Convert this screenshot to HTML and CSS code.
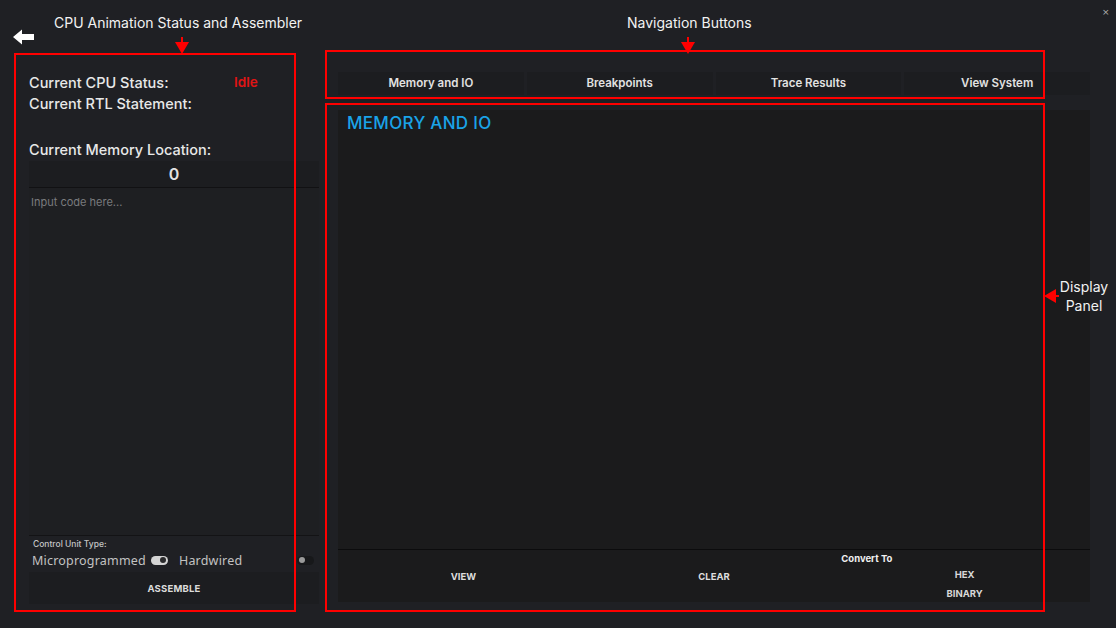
FILE: index.html
```html
<!DOCTYPE html>
<html>
<head>
<meta charset="utf-8">
<link rel="stylesheet" href="styles.css">
</head>
<body>
<div class="app">
  <aside class="left">
    <div class="status">
      <div class="status-row"><span>Current CPU Status:</span><span class="idle">Idle</span></div>
      <div class="status-row"><span>Current RTL Statement:</span></div>
    </div>
    <div class="mem-label">Current Memory Location:</div>
    <div class="mem-box">0</div>
    <textarea class="code" placeholder="Input code here..."></textarea>
    <div class="cu">
      <div class="cu-label">Control Unit Type:</div>
      <div class="cu-row">
        <span class="cu-opt">Microprogrammed</span>
        <span class="toggle on"><span class="knob"></span></span>
        <span class="cu-opt">Hardwired</span>
        <span class="spacer"></span>
        <span class="toggle off"><span class="knob"></span></span>
      </div>
    </div>
    <div class="assemble">ASSEMBLE</div>
  </aside>
  <main class="right">
    <nav class="nav">
      <div class="nav-btn">Memory and IO</div>
      <div class="nav-btn">Breakpoints</div>
      <div class="nav-btn">Trace Results</div>
      <div class="nav-btn">View System</div>
    </nav>
    <section class="display">
      <h1 class="title">MEMORY AND IO</h1>
      <div class="content"></div>
      <div class="actions">
        <div class="act">VIEW</div>
        <div class="act">CLEAR</div>
        <div class="convert">
          <div class="conv-label">Convert To</div>
          <div class="conv-opt">HEX</div>
          <div class="conv-opt">BINARY</div>
        </div>
      </div>
    </section>
  </main>
</div>

<svg class="back" width="22" height="16" viewBox="0 0 22 16"><path d="M0 8 L9 0.5 L9 5 L21 5 L21 11 L9 11 L9 15.5 Z" fill="#ffffff"/></svg>
<div class="close">×</div>

<div class="note note-left">CPU Animation Status and Assembler</div>
<div class="note note-nav">Navigation Buttons</div>
<div class="note note-display">Display<br>Panel</div>

<svg class="arrow arrow-1" width="14" height="17" viewBox="0 0 14 17"><rect x="6" y="0" width="2" height="6" fill="#ff0000"/><path d="M0 5 L14 5 L7 17 Z" fill="#ff0000"/></svg>
<svg class="arrow arrow-2" width="14" height="17" viewBox="0 0 14 17"><rect x="6" y="0" width="2" height="6" fill="#ff0000"/><path d="M0 5 L14 5 L7 17 Z" fill="#ff0000"/></svg>
<svg class="arrow arrow-3" width="15" height="14" viewBox="0 0 15 14"><path d="M0 7 L12 0 L12 14 Z" fill="#ff0000"/><rect x="11" y="6" width="4" height="2" fill="#ff0000"/></svg>

<div class="box box-left"></div>
<div class="box box-nav"></div>
<div class="box box-display"></div>
</body>
</html>
```

FILE: styles.css
```css
* { box-sizing: border-box; }
html, body {
  margin: 0;
  padding: 0;
  width: 1116px;
  height: 628px;
  overflow: hidden;
  background: #1f2024;
  font-family: Inter, "Noto Sans", sans-serif;
  color: #e6e6e6;
  position: relative;
}
.app {
  display: flex;
  gap: 19px;
  height: 628px;
  padding: 60px 26px 24px 29px;
}
.left {
  width: 290px;
  display: flex;
  flex-direction: column;
}
.status {
  padding-top: 12px;
}
.status-row {
  display: grid;
  grid-template-columns: 205px auto;
  font-size: 14.5px;
  font-weight: 500;
  line-height: 21px;
  color: #e8e8e8;
}
.idle {
  color: #e11414;
  font-weight: 600;
  font-size: 13.5px;
}
.mem-label {
  margin-top: 25px;
  font-size: 14.5px;
  font-weight: 500;
  line-height: 21px;
  color: #e8e8e8;
}
.mem-box {
  margin-top: 1px;
  height: 27px;
  background: #1c1d20;
  border-bottom: 1px solid #111113;
  text-align: center;
  font-size: 16px;
  font-weight: 600;
  line-height: 26px;
  color: #e2e2e2;
}
.code {
  flex: 1;
  resize: none;
  background: #1e1f22;
  border: none;
  border-bottom: 1px solid #131315;
  outline: none;
  color: #ddd;
  font-family: Inter, sans-serif;
  font-size: 11px;
  padding: 7px 2px;
  margin: 0;
}
.code::placeholder { color: #7a7b7e; }
.cu {
  height: 36px;
  padding: 2px 0 0 4px;
}
.cu-label {
  font-size: 8.5px;
  font-weight: 500;
  color: #c4c4c4;
  line-height: 12px;
}
.cu-row {
  display: flex;
  align-items: center;
  height: 20px;
  margin-left: -1px;
}
.cu-opt {
  font-family: "Noto Sans", sans-serif;
  font-size: 12.5px;
  color: #c2c2c2;
  letter-spacing: 0.2px;
}
.spacer { flex: 1; }
.toggle {
  display: inline-flex;
  align-items: center;
  width: 17px;
  height: 9px;
  border-radius: 5px;
  margin: 0 11px 0 5px;
  padding: 0 2px;
}
.toggle.on { background: #d4d4d4; justify-content: flex-end; }
.toggle.on .knob { background: #2a2a2c; }
.toggle.off { background: #17181a; justify-content: flex-start; margin: 0 5px 0 0; }
.toggle.off .knob { background: #9a9a9a; }
.knob {
  width: 6px;
  height: 6px;
  border-radius: 50%;
}
.assemble {
  height: 32px;
  background: #1c1d20;
  text-align: center;
  line-height: 33px;
  font-size: 9.5px;
  font-weight: 700;
  color: #dcdcdc;
  letter-spacing: 0.2px;
}
.right {
  flex: 1;
  display: flex;
  flex-direction: column;
}
.nav {
  margin-top: 12px;
  display: flex;
  gap: 3px;
  height: 23px;
}
.nav-btn {
  flex: 1;
  background: #1c1d20;
  text-align: center;
  line-height: 23px;
  font-size: 11.5px;
  font-weight: 600;
  color: #e2e2e2;
}
.display {
  margin-top: 15px;
  margin-bottom: 2px;
  flex: 1;
  background: #1b1b1c;
  display: flex;
  flex-direction: column;
}
.title {
  margin: 0;
  padding: 4px 9px 0;
  font-size: 17px;
  font-weight: 500;
  color: #1aa3e8;
  line-height: 19px;
  letter-spacing: 0.3px;
}
.content {
  flex: 1;
  border-bottom: 1px solid #0c0c0d;
}
.actions {
  height: 52px;
  display: grid;
  grid-template-columns: 1fr 1fr 1fr;
}
.act {
  text-align: center;
  font-size: 9.5px;
  font-weight: 700;
  color: #dedede;
  line-height: 54px;
}
.convert {
  display: flex;
  flex-direction: column;
  align-items: center;
  padding-top: 3px;
}
.conv-label {
  align-self: flex-start;
  font-size: 9.5px;
  font-weight: 700;
  color: #f0f0f0;
  line-height: 12px;
  margin-left: 2px;
}
.conv-opt {
  font-size: 9.5px;
  font-weight: 700;
  color: #d8d8d8;
  line-height: 19px;
}
.conv-opt:first-of-type { margin-top: 1px; }

/* overlays */
.back { position: absolute; left: 13px; top: 29px; }
.close {
  position: absolute;
  left: 1102px;
  top: 7px;
  font-size: 9px;
  color: #b0b0b0;
  font-family: "DejaVu Sans", sans-serif;
}
.note {
  position: absolute;
  font-family: Inter, sans-serif;
  font-size: 14px;
  color: #f2f2f2;
  line-height: 19px;
}
.note-left { left: 54px; top: 13px; }
.note-nav { left: 627px; top: 13px; }
.note-display { left: 1058px; top: 277px; text-align: center; width: 52px; }
.arrow { position: absolute; }
.arrow-1 { left: 175px; top: 37px; }
.arrow-2 { left: 681px; top: 37px; }
.arrow-3 { left: 1044px; top: 289px; }
.box {
  position: absolute;
  border: 2px solid #ff0000;
}
.box-left { left: 14px; top: 53px; width: 282px; height: 559px; }
.box-nav { left: 325px; top: 50px; width: 720px; height: 49px; }
.box-display { left: 325px; top: 103px; width: 720px; height: 509px; }
```
